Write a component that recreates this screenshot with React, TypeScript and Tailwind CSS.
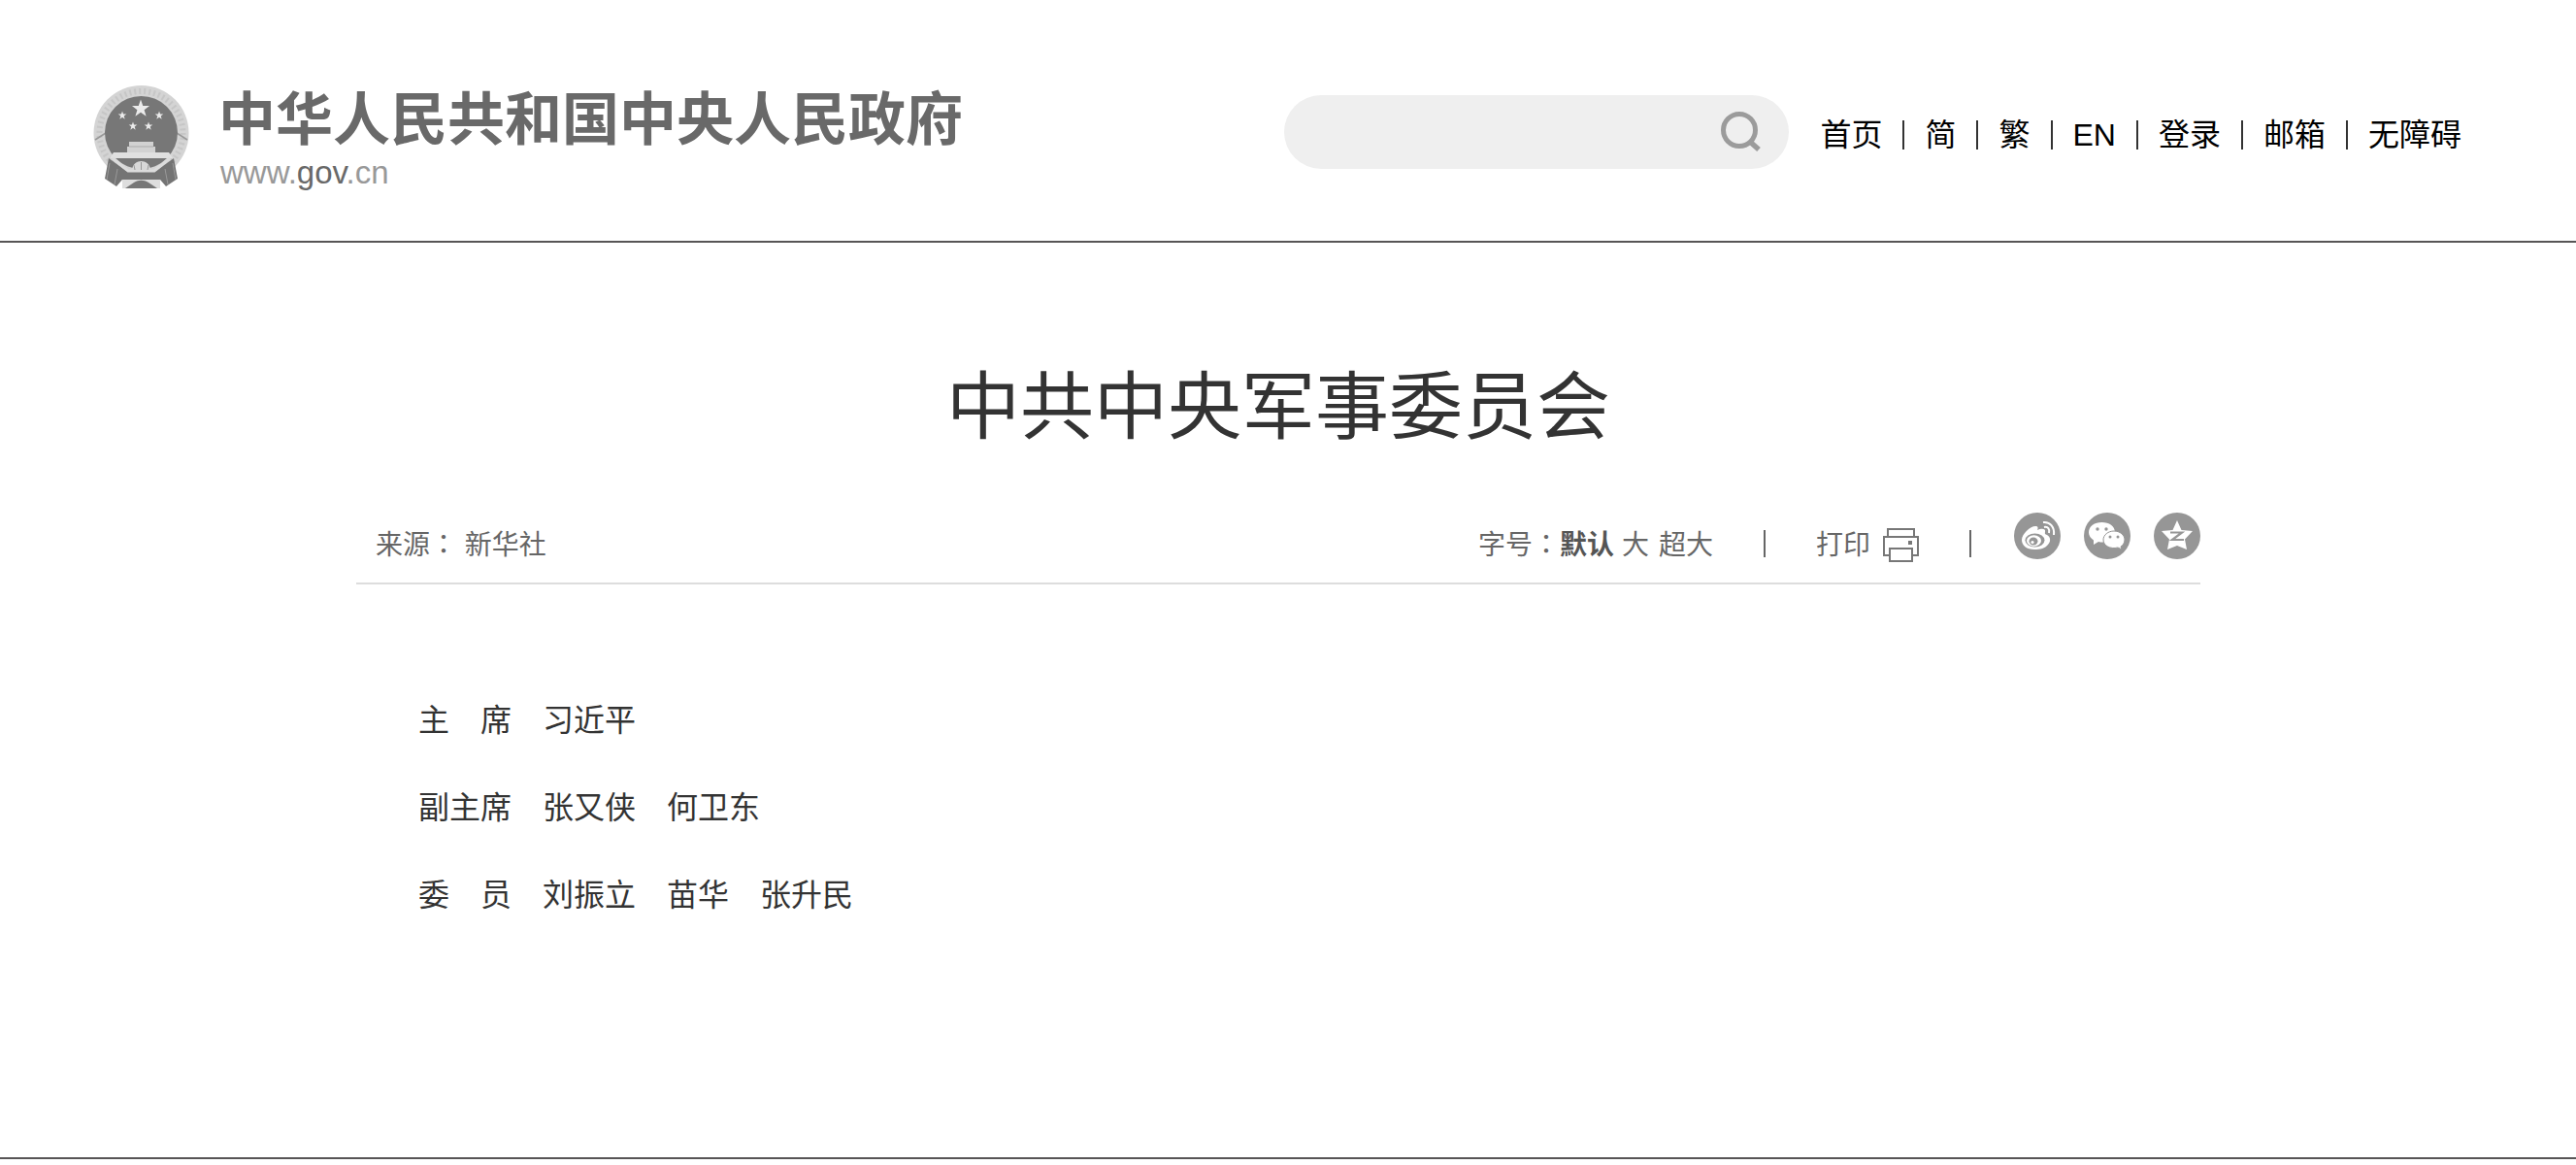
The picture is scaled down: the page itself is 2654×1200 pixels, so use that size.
import type { ReactNode } from "react";

const navLinks = ["首页", "简", "繁", "EN", "登录", "邮箱", "无障碍"];

const members = [
  "主　席　习近平",
  "副主席　张又侠　何卫东",
  "委　员　刘振立　苗华　张升民",
];

export default function App() {
  return (
    <div className="bg-white font-['Liberation_Sans','Noto_Sans_CJK_SC',sans-serif] text-[#333]">
      <header className="flex h-[250px] items-start justify-between border-b-2 border-[#575556] pr-[118px] pl-24">
        <a href="#" className="mt-[88px] flex gap-[30px]">
          <Emblem />
          <span className="flex flex-col">
            <span className="text-[59px] leading-[72px] font-bold text-[#696969]">中华人民共和国中央人民政府</span>
            <span className="pl-[2px] text-[33px] leading-[36px] text-[#999]">
              www.<span className="text-[#696969]">gov</span>.cn
            </span>
          </span>
        </a>
        <div className="mt-[98px] flex items-center gap-8">
          <form className="flex h-[76px] w-[520px] items-center rounded-full bg-[#efefef] pr-7 pl-8">
            <input type="text" aria-label="搜索" className="min-w-0 flex-1 bg-transparent text-[28px] outline-none" />
            <button type="button" aria-label="搜索">
              <SearchIcon />
            </button>
          </form>
          <nav className="flex pt-[6px] text-[32px] leading-[40px] text-black">
            {navLinks.map((label, i) => (
              <span key={label} className="flex items-center">
                {i > 0 && <span className="mx-[21px] h-[30px] w-[2px] bg-[#333]" />}
                <a href="#">{label}</a>
              </span>
            ))}
          </nav>
        </div>
      </header>

      <main className="pr-5">
        <article className="mx-auto max-w-[1900px]">
          <h1 className="pt-[114px] text-center text-[76px] leading-[112px]">中共中央军事委员会</h1>
          <div className="mt-[52px] flex h-[74px] items-start justify-between border-b-2 border-[#ddd] pl-5 text-[28px] leading-[40px] text-[#666]">
            <p className="mt-[14px]">
              来源<Colon /> 新华社
            </p>
            <div className="flex items-start gap-[52px]">
              <div className="mt-[14px] flex">
                <span>
                  字号<Colon />
                </span>
                <button type="button" className="font-bold text-[#555]">默认</button>
                <button type="button" className="ml-2">大</button>
                <button type="button" className="ml-[10px]">超大</button>
              </div>
              <Divider />
              <button type="button" className="mt-[14px] flex items-center gap-3">
                打印
                <PrinterIcon />
              </button>
              <Divider />
              <div className="-ml-2 flex gap-6">
                <ShareLink label="微博"><WeiboIcon /></ShareLink>
                <ShareLink label="微信"><WechatIcon /></ShareLink>
                <ShareLink label="QQ空间"><QzoneIcon /></ShareLink>
              </div>
            </div>
          </div>
          <div className="px-16 pt-[95px] pb-[225px] text-[32px] leading-[90px]">
            {members.map((line) => (
              <p key={line}>{line}</p>
            ))}
          </div>
        </article>
      </main>

      <footer className="h-2 border-t-2 border-[#575556]" />
    </div>
  );
}

// the TC face centres the full-width colon in its box
function Colon() {
  return (
    <span lang="zh-TW" className="font-['Noto_Sans_CJK_TC',sans-serif] leading-none">：</span>
  );
}

function Divider() {
  return <span className="mt-[18px] h-[28px] w-[2px] bg-[#666]" />;
}

function ShareLink({ label, children }: { label: string; children: ReactNode }) {
  return (
    <a href="#" aria-label={label} className="flex size-12 items-center justify-center rounded-full bg-[#969696]">
      {children}
    </a>
  );
}

function SearchIcon() {
  return (
    <svg className="size-[42px]" viewBox="0 0 42 42" fill="none" stroke="#9b9b9b" strokeWidth="5">
      <circle cx="19" cy="19" r="16.5" />
      <path d="M30 31l9 8" strokeWidth="5.5" />
    </svg>
  );
}

function PrinterIcon() {
  return (
    <svg className="h-9 w-[38px]" viewBox="0 0 38 36" fill="none" stroke="#777" strokeWidth="2">
      <path d="M6 9V1h27v8M7 28H2V9h35v19h-5" />
      <path d="M8 21h23v13H8z" />
      <path d="M27 13h4v4h-4z" fill="#777" stroke="none" />
    </svg>
  );
}

function WeiboIcon() {
  return (
    <svg className="size-12" viewBox="0 0 48 48" fill="none">
      <path d="M8 28c0-6 9-14 14-14 3 0 3 2 2 4 4-2 9-2 8 2-.5 2 0 2 2 3 4 2 4 7 1 10-3 4-8 5-14 5-8 0-13-4-13-10z" fill="#fff" />
      <ellipse cx="21.5" cy="28.5" rx="10" ry="7" fill="#969696" />
      <ellipse cx="20.500" cy="29" rx="7.500" ry="5.800" fill="#fff" />
      <ellipse cx="20" cy="29.500" rx="4.500" ry="4" fill="#969696" />
      <circle cx="19" cy="30.500" r="1.600" fill="#fff" />
      <path d="M30 10c7-1 12 5 11 13M31 15c4-1 6 2 5 6" stroke="#fff" strokeWidth="2" />
    </svg>
  );
}

function WechatIcon() {
  return (
    <svg className="size-12" viewBox="0 0 48 48">
      <path d="M18.500 10C11 10 5 14 5 20.500c0 3 2 6 5 8v4.500l5-3c8 2 17-2 17-9.500C32 14 26 10 18.500 10z" fill="#fff" />
      <path d="M31 19c6 0 11 4 11 9 0 3-2 6-4 7l1 3-4-2c-8 2-15-2-15-8 0-5 5-9 11-9z" fill="#fff" stroke="#969696" />
      <g fill="#969696">
        <circle cx="14" cy="17" r="1.700" />
        <circle cx="23" cy="17" r="1.700" />
        <circle cx="27" cy="25" r="1.500" />
        <circle cx="35" cy="25" r="1.500" />
      </g>
    </svg>
  );
}

function QzoneIcon() {
  return (
    <svg className="size-12" viewBox="0 0 48 48">
      <path d="M24 8l4.500 10L40 19l-8 8.500L34 38l-10-4-10 4 2-10.500L8 19l11.500-1z" fill="#fff" />
      <path d="M17 20.500h12L19 28h12" fill="none" stroke="#969696" strokeWidth="2.200" />
    </svg>
  );
}

function Star({ x, y, r }: { x: number; y: number; r: number }) {
  return (
    <path
      transform={`translate(${x} ${y}) scale(${r})`}
      d="M0-1L.24-.32.95-.31.38.12.59.81 0 .4-.59.81-.38.12-.95-.31-.24-.32z"
      fill="#ebebeb"
    />
  );
}

function Emblem() {
  return (
    <svg className="h-[107px] w-[99px]" viewBox="0 0 99 107">
      <circle cx="49.500" cy="49" r="49" fill="#d4d4d4" />
      <circle cx="49.500" cy="49" r="43" fill="none" stroke="#c6c6c6" strokeWidth="6" strokeDasharray="2 3" />
      <path d="M2 56l11-7M97 56l-11-7" stroke="#999" strokeWidth="1.500" />
      <circle cx="49.500" cy="48.500" r="37.500" fill="#777" />
      <Star x={49} y={24} r={9.5} />
      <Star x={30} y={31} r={4.5} />
      <Star x={68} y={31} r={4.5} />
      <Star x={41} y={42} r={4.5} />
      <Star x={57} y={42} r={4.5} />
      <path d="M37 58h25v5h2v6H35v-6h2z" fill="#d2d2d2" />
      <path d="M37 63h25" stroke="#aaa" />
      <path d="M21 69h57l4 6H17z" fill="#e0e0e0" />
      <path d="M16 75l18 13h31l18-13 4 21-12 8-6-7H30l-6 7-12-8z" fill="#747474" />
      <path d="M20 75l16 13h27l16-13" fill="none" stroke="#dcdcdc" strokeWidth="3" />
      <path d="M40 87c1-12 18-12 19 0z" fill="#d8d8d8" />
      <path d="M43 87l-1-5M49.500 87v-8M56 87l1-5" stroke="#999" />
      <path d="M30 97h39v9H30z" fill="#dedede" />
      <path d="M33 106l9-6c5-3 10-3 15 0l9 6z" fill="#777" />
      <path d="M17 80l-3 17M82 80l3 17M25 86l-3 16M74 86l3 16" stroke="#999" />
    </svg>
  );
}
